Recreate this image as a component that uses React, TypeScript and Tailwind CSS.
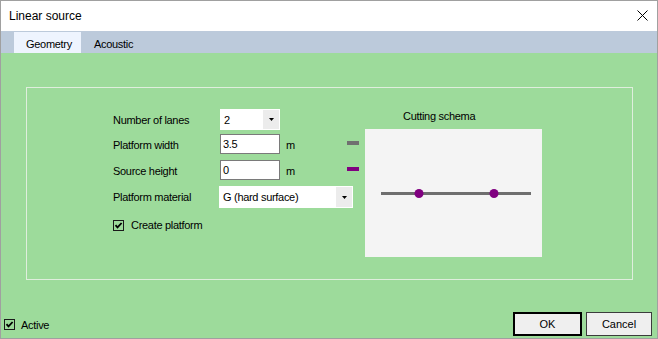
import React from 'react';

const font = "font-['Liberation_Sans',Arial,sans-serif]";

const Arrow: React.FC = () => (
  <svg width="5" height="3" viewBox="0 0 5 3">
    <path d="M0 0h5L2.5 3z" fill="#000" />
  </svg>
);

const Check: React.FC = () => (
  <svg width="11" height="11" viewBox="0 0 11 11" className="shrink-0">
    <rect x="0.5" y="0.5" width="10" height="10" fill="none" stroke="#1a1a1a" />
    <path d="M2.5 5.2 L4.5 7.4 L8.6 3" fill="none" stroke="#000" strokeWidth="1.8" />
  </svg>
);

const Combo: React.FC<{ value: string; width: string; height: string }> = ({ value, width, height }) => (
  <div className={`${width} ${height} bg-white flex items-stretch p-[1px]`}>
    <div className="flex-1 pl-[3px] pt-[4px] leading-[13px]">{value}</div>
    <div className="w-[16px] bg-[#ececec] flex items-center justify-center">
      <Arrow />
    </div>
  </div>
);

const Field: React.FC<{ value: string }> = ({ value }) => (
  <div className="w-[60px] h-[20px] bg-white border border-[#7a7a7a] pl-[2px] pt-[3px] leading-[13px]">
    {value}
  </div>
);

const App: React.FC = () => {
  return (
    <div
      className={`w-[658px] h-[339px] border border-[#a0a0a0] flex flex-col bg-[#9ddb9b] text-black text-[11px] tracking-[-0.3px] ${font}`}
    >
      {/* title bar */}
      <div className="h-[30px] bg-white flex items-start justify-between pl-[8px] pr-[9px]">
        <span className="mt-[8px] text-[12px] leading-[14px] tracking-[0px]">Linear source</span>
        <svg width="11" height="11" viewBox="0 0 11 11" className="mt-[9px]">
          <path d="M0.5 0.5 L10.5 10.5 M10.5 0.5 L0.5 10.5" stroke="#000" strokeWidth="1" />
        </svg>
      </div>

      {/* tabs */}
      <div className="h-[22px] bg-[#bccadb] flex items-start pl-[13px]">
        <div className="mt-[1px] w-[67px] h-[21px] bg-[#eef4fe] pl-[12px] pt-[6px] leading-[13px]">Geometry</div>
        <div className="ml-[13px] pt-[7px] leading-[13px]">Acoustic</div>
      </div>

      {/* content */}
      <div className="flex-1 flex flex-col">
        <div className="mt-[34px] ml-[25px] w-[607px] h-[193px] border border-[#dfeedd] flex items-start">
          {/* form */}
          <div className="ml-[86px] mt-[21px] w-[246px] flex flex-col">
            <div className="flex items-start">
              <span className="w-[107px] pt-[5px] leading-[13px]">Number of lanes</span>
              <Combo value="2" width="w-[60px]" height="h-[21px]" />
            </div>
            <div className="flex items-start mt-[4px]">
              <span className="w-[107px] pt-[5px] leading-[13px]">Platform width</span>
              <Field value="3.5" />
              <span className="ml-[6px] pt-[5px] leading-[13px]">m</span>
              <div className="ml-auto mt-[7px] w-[12px] h-[4px] bg-[#707070]" />
            </div>
            <div className="flex items-start mt-[6px]">
              <span className="w-[107px] pt-[5px] leading-[13px]">Source height</span>
              <Field value="0" />
              <span className="ml-[6px] pt-[5px] leading-[13px]">m</span>
              <div className="ml-auto mt-[7px] w-[12px] h-[4px] bg-[#800080]" />
            </div>
            <div className="flex items-start mt-[6px]">
              <span className="w-[106px] pt-[5px] leading-[13px]">Platform material</span>
              <Combo value="G (hard surface)" width="w-[134px]" height="h-[22px]" />
            </div>
            <div className="flex items-start mt-[11px]">
              <div className="mt-[1px]">
                <Check />
              </div>
              <span className="ml-[7px] leading-[13px]">Create platform</span>
            </div>
          </div>

          {/* schema */}
          <div className="ml-[6px] mt-[22px] flex flex-col">
            <span className="pl-[38px] leading-[13px]">Cutting schema</span>
            <div className="mt-[6px] w-[177px] h-[128px] bg-[#f4f4f4]">
              <svg width="177" height="128" viewBox="0 0 177 128">
                <rect x="16" y="63" width="150" height="3" fill="#6e6e6e" />
                <circle cx="54" cy="64.5" r="4.5" fill="#800080" />
                <circle cx="129" cy="64.5" r="4.5" fill="#800080" />
              </svg>
            </div>
          </div>
        </div>

        {/* bottom bar */}
        <div className="mt-auto mb-[2px] flex items-center pl-[3px] pr-[5px]">
          <div className="mt-[1px]">
            <Check />
          </div>
          <span className="ml-[6px] mt-[2px] leading-[13px]">Active</span>
          <button className="ml-auto w-[69px] h-[24px] bg-[#efefef] border-2 border-black leading-[13px] tracking-[0px]">
            OK
          </button>
          <button className="ml-[4px] w-[66px] h-[24px] bg-[#efefef] border border-[#3c3c3c] leading-[13px] tracking-[0px]">
            Cancel
          </button>
        </div>
      </div>
    </div>
  );
};

export default App;
